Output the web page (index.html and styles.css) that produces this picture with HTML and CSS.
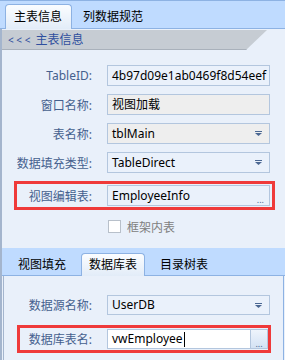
FILE: index.html
```html
<!DOCTYPE html>
<html lang="zh">
<head>
    <meta charset="UTF-8">
    <title>主表信息</title>
    <link rel="stylesheet" href="styles.css">
</head>
<body>
    <div class="tabbar">
        <div class="tab active">主表信息</div>
        <div class="tab">列数据规范</div>
    </div>

    <div class="page">
        <div class="section-head"><span class="chev">&lt; &lt; &lt;</span>主表信息</div>

        <div class="form">
            <div class="row">
                <label>TableID:</label>
                <div class="field">4b97d09e1ab0469f8d54eef</div>
            </div>
            <div class="row">
                <label>窗口名称:</label>
                <div class="field readonly">视图加载</div>
            </div>
            <div class="row">
                <label>表名称:</label>
                <div class="field readonly combo">tblMain<span class="arrow"><svg width="7" height="5" viewBox="0 0 7 5"><rect x="0" y="0" width="7" height="1" fill="#4a6792"/><path d="M0 2h7l-3.5 3z" fill="#4a6792"/></svg></span></div>
            </div>
            <div class="row">
                <label>数据填充类型:</label>
                <div class="field combo">TableDirect<span class="arrow"><svg width="7" height="5" viewBox="0 0 7 5"><rect x="0" y="0" width="7" height="1" fill="#4a6792"/><path d="M0 2h7l-3.5 3z" fill="#4a6792"/></svg></span></div>
            </div>
            <div class="row marked">
                <label>视图编辑表:</label>
                <div class="field">EmployeeInfo<span class="dots">...</span></div>
            </div>
        </div>

        <div class="check-row">
            <span class="checkbox"></span>
            <span>框架内表</span>
        </div>

        <div class="tabbar sub">
            <div class="tab">视图填充</div>
            <div class="tab active">数据库表</div>
            <div class="tab">目录树表</div>
        </div>

        <div class="subpanel">
            <div class="row">
                <label>数据源名称:</label>
                <div class="field combo">UserDB<span class="arrow"><svg width="7" height="5" viewBox="0 0 7 5"><rect x="0" y="0" width="7" height="1" fill="#4a6792"/><path d="M0 2h7l-3.5 3z" fill="#4a6792"/></svg></span></div>
            </div>
            <div class="row marked">
                <label>数据库表名:</label>
                <div class="field focus">vwEmployee<span class="caret"></span></div>
                <div class="browse">...</div>
            </div>
        </div>
    </div>
</body>
</html>
```

FILE: styles.css
```css
body {
    margin: 0;
    width: 285px;
    height: 360px;
    overflow: hidden;
    background: #e9f0fa;
    font-family: "Noto Sans", "Noto Sans CJK SC", sans-serif;
    font-size: 12px;
    color: #000;
}

/* Tab strips */
.tabbar {
    height: 27px;
    background: #bfdbff;
    border-top: 1px solid #8db2e3;
    border-bottom: 1px solid #8db2e3;
    display: flex;
    align-items: flex-end;
    padding-left: 5px;
}

.tab {
    height: 24px;
    line-height: 23px;
    padding: 0 8px;
    margin-right: 2px;
    border: 1px solid transparent;
    border-bottom: none;
    box-sizing: border-box;
}

.tab.active {
    padding: 0 9px 0 8px;
    border-color: #8db2e3;
    border-radius: 4px 4px 0 0;
    background: linear-gradient(#fbfdff, #e2ecf8);
    margin-bottom: -1px;
    height: 25px;
}

/* Upper panel */
.page {
    border-left: 2px solid #a4b5cd;
    height: 330px;
    padding-top: 1px;
    display: flex;
    flex-direction: column;
}

.section-head {
    height: 20px;
    line-height: 19px;
    background: #c6ccd3;
    width: 265px;
    clip-path: polygon(0 0, 265px 0, 244px 100%, 0 100%);
    box-shadow: inset 0 -1px #a9b1bb;
    color: #2f4f9e;
    padding-left: 6px;
    box-sizing: border-box;
}

.chev {
    font-size: 10px;
    margin-right: 5px;
}

.form {
    padding-top: 15px;
    display: flex;
    flex-direction: column;
    gap: 8px;
}

.row {
    display: flex;
    align-items: center;
}

.row label {
    width: 90px;
    text-align: right;
    margin-right: 15px;
    color: #45608e;
}

.field {
    width: 163px;
    height: 21px;
    line-height: 19px;
    box-sizing: border-box;
    border: 1px solid #b3c6de;
    background: #eaf1fb;
    padding-left: 4px;
    white-space: nowrap;
    overflow: hidden;
    position: relative;
}

.field.readonly {
    background: #eeeeee;
}

.field.focus {
    background: #fff;
}

.arrow {
    position: absolute;
    right: 7px;
    top: 7px;
    line-height: 0;
}

.dots {
    position: absolute;
    right: 5px;
    bottom: 1px;
    font-size: 9px;
    line-height: 9px;
    color: #4a6792;
}

.row.marked {
    margin-left: 12px;
    border: 3px solid #ef3a3a;
    padding: 1px 2px 1px 0;
    width: 261px;
    box-sizing: border-box;
}

.row.marked label {
    width: 75px;
}

/* Checkbox */
.check-row {
    display: flex;
    align-items: center;
    margin: 10px 0 15px 106px;
    height: 13px;
    color: #808080;
}

.checkbox {
    width: 13px;
    height: 13px;
    box-sizing: border-box;
    border: 1px solid #b8c0ca;
    background: #fff;
    margin-right: 6px;
}

/* Lower tabs */
.tabbar.sub {
    border-top: none;
    height: 27px;
    padding-left: 7px;
    flex-shrink: 0;
}

.tabbar.sub .tab {
    height: 22px;
    line-height: 21px;
    margin-right: 6px;
}

.tabbar.sub .tab.active {
    height: 23px;
    padding: 0 7px;
    margin-right: 6px;
}

.subpanel {
    flex: 1;
    margin: 0 1px;
    border-left: 1px solid #a4b5cd;
    border-right: 1px solid #8db2e3;
    padding-top: 19px;
    display: flex;
    flex-direction: column;
    gap: 10px;
}

.subpanel .row label {
    width: 88px;
}

.subpanel .field {
    height: 20px;
    line-height: 18px;
}

.subpanel .row.marked {
    margin-left: 13px;
    width: 254px;
    padding: 1px 0;
}

.subpanel .row.marked label {
    width: 72px;
}

.subpanel .row.marked .field {
    width: 144px;
}

.caret {
    display: inline-block;
    width: 1px;
    height: 15px;
    background: #000;
    vertical-align: middle;
    margin-left: 1px;
}

.browse {
    width: 17px;
    height: 20px;
    box-sizing: border-box;
    border: 1px solid #b3c6de;
    border-left: none;
    background: linear-gradient(#eef4fc, #d3e2f4);
    font-size: 9px;
    line-height: 9px;
    color: #4a6792;
    text-align: center;
    padding-top: 9px;
}
```
